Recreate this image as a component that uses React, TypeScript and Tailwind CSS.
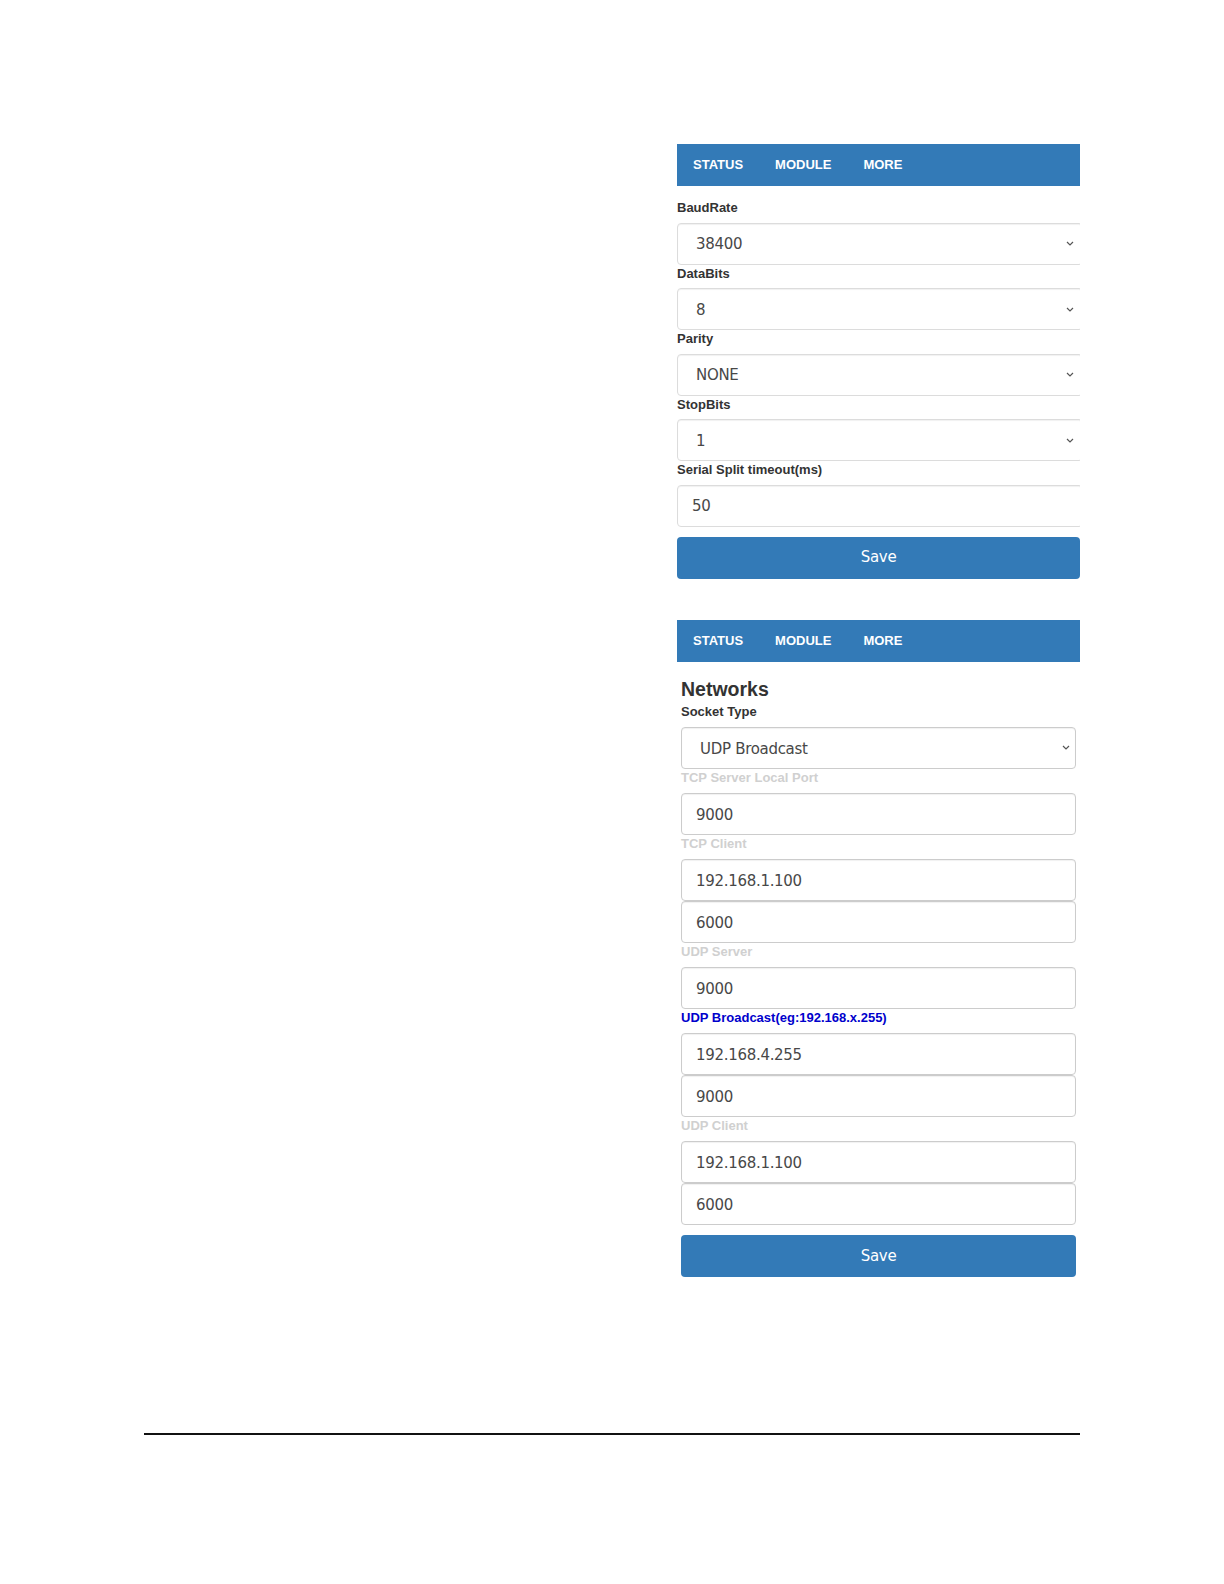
import React from 'react';

const navItems = ['STATUS', 'MODULE', 'MORE'];

const Chevron: React.FC = () => (
  <svg width="8" height="5" viewBox="0 0 8 5" className="shrink-0">
    <path d="M1 1 L4 4 L7 1" fill="none" stroke="#555" strokeWidth="1.2" />
  </svg>
);

const NavBar: React.FC = () => (
  <div className="h-[42px] bg-[#337ab7] flex items-center">
    {navItems.map((item) => (
      <span key={item} className="px-[16px] text-white text-[13px] font-bold font-['Liberation_Sans',Arial,sans-serif]">
        {item}
      </span>
    ))}
  </div>
);

const valueFont = "pt-[2px] font-['DejaVu_Sans',Verdana,sans-serif] text-[15px] tracking-[-0.3px] text-[#484848]";

export default function App() {
  return (
    <div className="min-h-[1584px] bg-white font-['Liberation_Sans',Arial,sans-serif] text-[#333]">
      <div className="w-[403px] ml-[677px] pt-[144px]">
        {/* Serial settings */}
        <NavBar />
        <div className="overflow-hidden pt-[13px]">
          {[
            ['BaudRate', '38400'],
            ['DataBits', '8'],
            ['Parity', 'NONE'],
            ['StopBits', '1'],
          ].map(([label, value]) => (
            <div key={label}>
              <label className="block text-[13px] leading-[18.5px] font-bold mb-[5px]">{label}</label>
              <div className="w-[406px] h-[42px] border border-[#dcdcdc] rounded-[4px] shadow-[inset_0_1px_1px_rgba(0,0,0,0.06)] flex items-center justify-between pl-[18px] pr-[8px]">
                <span className={valueFont}>{value}</span>
                <Chevron />
              </div>
            </div>
          ))}
          <label className="block text-[13px] leading-[18.5px] font-bold mb-[5px]">Serial Split timeout(ms)</label>
          <div className="w-[406px] h-[42px] border border-[#dcdcdc] rounded-[4px] shadow-[inset_0_1px_1px_rgba(0,0,0,0.06)] flex items-center pl-[14px]">
            <span className={valueFont}>50</span>
          </div>
        </div>
        <button className="mt-[10px] w-full h-[42px] bg-[#337ab7] rounded-[4px] text-white font-['DejaVu_Sans',Verdana,sans-serif] text-[15px] tracking-[-0.3px]">
          Save
        </button>

        {/* Network settings */}
        <div className="mt-[41.5px]">
          <NavBar />
          <div className="px-[4px]">
            <h2 className="mt-[17px] mb-[2.5px] text-[19.5px] leading-[21.5px] font-bold">Networks</h2>
            <label className="block text-[13px] leading-[18.8px] font-bold mb-[5px]">Socket Type</label>
            <div className="h-[42.2px] border border-[#ccc] rounded-[4px] shadow-[inset_0_1px_1px_rgba(0,0,0,0.06)] flex items-center justify-between pl-[18px] pr-[5px]">
              <span className={valueFont}>UDP Broadcast</span>
              <Chevron />
            </div>
            {[
              { label: 'TCP Server Local Port', values: ['9000'], active: false },
              { label: 'TCP Client', values: ['192.168.1.100', '6000'], active: false },
              { label: 'UDP Server', values: ['9000'], active: false },
              { label: 'UDP Broadcast(eg:192.168.x.255)', values: ['192.168.4.255', '9000'], active: true },
              { label: 'UDP Client', values: ['192.168.1.100', '6000'], active: false },
            ].map((group) => (
              <div key={group.label}>
                <label
                  className={
                    group.active
                      ? 'block text-[13px] leading-[18.8px] font-bold mb-[5px] text-[#0000cc]'
                      : 'block text-[13px] leading-[18.8px] font-bold mb-[5px] text-[#d0d0d0]'
                  }
                >
                  {group.label}
                </label>
                {group.values.map((v, i) => (
                  <div
                    key={i}
                    className="h-[42.2px] border border-[#ccc] rounded-[4px] shadow-[inset_0_1px_1px_rgba(0,0,0,0.06)] flex items-center pl-[14px]"
                  >
                    <span className={valueFont}>{v}</span>
                  </div>
                ))}
              </div>
            ))}
            <button className="mt-[10px] w-full h-[42px] bg-[#337ab7] rounded-[4px] text-white font-['DejaVu_Sans',Verdana,sans-serif] text-[15px] tracking-[-0.3px]">
              Save
            </button>
          </div>
        </div>
      </div>

      {/* page footer rule */}
      <div className="ml-[144px] w-[936px] mt-[156px] h-[1.5px] bg-[#111]" />
    </div>
  );
}
